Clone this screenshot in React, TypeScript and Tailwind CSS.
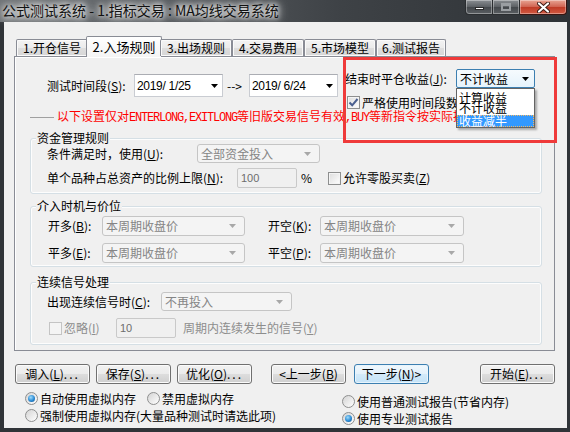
import React from "react";

const tabs = [
  { label: "1.开仓信号", active: false },
  { label: "2.入场规则", active: true },
  { label: "3.出场规则", active: false },
  { label: "4.交易费用", active: false },
  { label: "5.市场模型", active: false },
  { label: "6.测试报告", active: false },
];

function Acc({ k }: { k: string }) {
  return (
    <>
      (<span className="underline underline-offset-[1px]">{k}</span>)
    </>
  );
}

function Arrow({ color }: { color: string }) {
  return (
    <svg width="7" height="4" viewBox="0 0 7 4">
      <path d="M0 0h7L3.5 4z" fill={color} />
    </svg>
  );
}

function DisabledSelect({ text, className }: { text: string; className: string }) {
  return (
    <div
      className={
        "flex items-center justify-between rounded-[3px] border border-[#c5c5c5] bg-[#f4f4f4] pl-[3px] pr-[8px] text-[#858585] " +
        className
      }
    >
      <span>{text}</span>
      <Arrow color="#a8a8a8" />
    </div>
  );
}

function DisabledInput({ value }: { value: string }) {
  return (
    <div className="flex h-[20px] w-[60px] items-start rounded-[2px] border border-[#c9c9c9] bg-[#f0f0f0] pl-[3px] pt-[1px] font-['Liberation_Sans',sans-serif] text-[11px] text-[#6d6d6d]">
      {value}
    </div>
  );
}

function Check({ checked, disabled }: { checked?: boolean; disabled?: boolean }) {
  return (
    <div
      className={
        "flex h-[13px] w-[13px] shrink-0 items-center justify-center border " +
        (disabled
          ? "border-[#c4c4c4] bg-[#f4f4f4]"
          : "border-[#8e8f8f] bg-[linear-gradient(135deg,#dcdcdc,#ffffff)] shadow-[inset_0_0_0_1px_#f4f4f4]")
      }
    >
      {checked && (
        <svg width="11" height="11" viewBox="0 0 11 11">
          <path d="M1.5 5.5L4.2 8.3L9.5 2" fill="none" stroke="#4a5f8f" strokeWidth="2" />
        </svg>
      )}
    </div>
  );
}

function Radio({ checked }: { checked?: boolean }) {
  return (
    <div className="flex h-[13px] w-[13px] shrink-0 items-center justify-center rounded-full border border-[#8e8f8f] bg-[linear-gradient(135deg,#d4d4d4,#ffffff)]">
      {checked && (
        <div className="h-[7px] w-[7px] rounded-full bg-[radial-gradient(circle_at_40%_35%,#9fdcfb,#2a8ad4_55%,#0f4d86)]" />
      )}
    </div>
  );
}

function Btn({ children, className, focus }: { children: React.ReactNode; className: string; focus?: boolean }) {
  return (
    <div
      className={
        "flex h-[20px] w-[75px] items-center justify-center rounded-[3px] border leading-none " +
        (focus
          ? "border-[#3c7fb1] bg-[linear-gradient(#f1f8fd,#e3f1fb_50%,#d3eaf9_51%,#c4e3f8)] shadow-[inset_0_0_0_1px_#e8f4fc] "
          : "border-[#707070] bg-[linear-gradient(#f2f2f2,#ebebeb_50%,#dddddd_51%,#cfcfcf)] shadow-[inset_0_0_0_1px_#fbfbfb] ") +
        className
      }
    >
      {children}
    </div>
  );
}

function Dots() {
  return <span className="tracking-[2px]">...</span>;
}

function Group({ title, className, children }: { title: string; className: string; children: React.ReactNode }) {
  return (
    <div
      className={
        "relative ml-[15px] w-[512px] rounded-[3px] border border-[#d5dfe5] shadow-[inset_0_0_0_1px_#fdfdfd] " + className
      }
    >
      <span className="absolute -top-[8px] left-[5px] bg-[#f0f0f0] px-[1px] leading-[14px]">{title}</span>
      {children}
    </div>
  );
}

export default function App() {
  return (
    <div className="relative flex h-[432px] w-[570px] flex-col overflow-hidden bg-[#303438] font-['Noto_Sans_CJK_SC',sans-serif] text-[12px] text-black">
      {/* title bar */}
      <div className="flex h-[22px] shrink-0 items-start justify-between bg-[linear-gradient(90deg,#6f7376_0%,#585c60_30%,#3e4246_60%,#2e3236_100%)]">
        <div className="pl-[2px] pt-[1px] text-[14px] leading-[18px] text-[#111] [text-shadow:0_0_5px_#fff,0_0_9px_#fff,0_0_12px_#fff]">
          公式测试系统 - 1.指标交易 : MA均线交易系统
        </div>
        <div className="mr-[3px] flex">
          <div className="flex h-[15px] w-[28px] items-center justify-center rounded-bl-[4px] border border-t-0 border-[#2a2d30] bg-[linear-gradient(#8a8e92,#5b5f63_50%,#44484c_51%,#5a5e62)] shadow-[inset_0_0_0_1px_rgba(255,255,255,0.35)]">
            <div className="mt-[3px] h-[3px] w-[9px] border border-[#2a2a2a] bg-white" />
          </div>
          <div className="flex h-[15px] w-[27px] items-center justify-center border border-l-0 border-t-0 border-[#2a2d30] bg-[linear-gradient(#8a8e92,#5b5f63_50%,#44484c_51%,#5a5e62)] shadow-[inset_0_0_0_1px_rgba(255,255,255,0.35)]">
            <div className="h-[8px] w-[10px] border-[2px] border-t-[3px] border-[#9a9ea2]" />
          </div>
          <div className="flex h-[15px] w-[47px] items-center justify-center rounded-br-[4px] border border-l-0 border-t-0 border-[#3a1410] bg-[linear-gradient(#e8a493,#d0624f_50%,#bf3a25_51%,#d25a42)] shadow-[inset_0_0_0_1px_rgba(255,255,255,0.35)]">
            <svg width="13" height="11" viewBox="0 0 13 11">
              <path d="M2 1.5L11 9.5M11 1.5L2 9.5" stroke="#3a1a14" strokeWidth="4" strokeLinecap="round" />
              <path d="M2 1.5L11 9.5M11 1.5L2 9.5" stroke="#fff" strokeWidth="2.2" strokeLinecap="round" />
            </svg>
          </div>
        </div>
      </div>

      {/* client */}
      <div className="mb-[4px] ml-[4px] mr-[3px] flex flex-1 flex-col bg-[#f0f0f0]">
        {/* tabs */}
        <div className="relative z-10 -mb-px mt-[14px] flex h-[21px] items-end pl-[12px]">
          {tabs.map((t, i) =>
            t.active ? (
              <div
                key={t.label}
                className="-mx-[2px] flex h-[21px] w-[76px] items-start justify-center rounded-t-[2px] border border-b-0 border-[#898c95] bg-[linear-gradient(#ffffff,#f4f4f4)] pt-[1px] text-[13px] leading-[17px]"
              >
                {t.label}
              </div>
            ) : (
              <div
                key={t.label}
                className={
                  "mb-[1px] flex h-[17px] items-center justify-center rounded-t-[2px] border border-b-0 border-[#898c95] bg-[linear-gradient(#f3f3f3,#ebebeb_50%,#dedede_51%,#d6d6d6)] shadow-[inset_0_0_0_1px_#fafafa] leading-none " +
                  (i === 5 ? "w-[70px]" : "w-[72px]")
                }
              >
                {t.label}
              </div>
            )
          )}
        </div>

        {/* panel */}
        <div className="relative ml-[10px] flex h-[295px] w-[541px] flex-col border border-[#898c95] bg-[#f0f0f0] shadow-[inset_1px_1px_0_#ffffff]">
          <div className="mt-[12px] flex h-[41px]">
            <div className="mt-[5px] flex h-[23px] items-center pl-[32px]">
              <span className="w-[87px]">
                测试时间段<Acc k="S" />:
              </span>
              <div className="flex h-[23px] w-[89px] items-center justify-between border border-[#c9ccd2] border-t-[#abadb3] bg-white pl-[2px] pr-[4px] font-['Liberation_Sans',sans-serif] text-[12px] tracking-[-0.3px]">
                <span>2019/ 1/25</span>
                <Arrow color="#000" />
              </div>
              <span className="ml-[4px] w-[22px]">--&gt;</span>
              <div className="flex h-[23px] w-[89px] items-center justify-between border border-[#c9ccd2] border-t-[#abadb3] bg-white pl-[2px] pr-[4px] font-['Liberation_Sans',sans-serif] text-[12px] tracking-[-0.3px]">
                <span>2019/ 6/24</span>
                <Arrow color="#000" />
              </div>
            </div>
            <div className="ml-[7px] flex flex-col">
              <div className="flex h-[19px] items-center">
                <span className="w-[111px]">
                  结束时平仓收益<Acc k="J" />:
                </span>
                <div className="relative flex h-[19px] w-[79px] items-center justify-between rounded-[2px] border border-[#3c7fb1] bg-[linear-gradient(#f6fbfe,#e6f3fc)] pl-[3px] pr-[5px]">
                  <span>不计收益</span>
                  <Arrow color="#000" />
                  <div className="absolute left-[-1px] top-[18px] z-20 h-[40px] w-[79px] border border-[#646464] bg-white pt-[4px] shadow-[2px_2px_2px_rgba(0,0,0,0.3)]">
                    <div className="h-[10px] pl-[2px] leading-[10px]">计算收益</div>
                    <div className="h-[10px] pl-[2px] leading-[10px]">不计收益</div>
                    <div className="mt-[2px] h-[12px] border border-dotted border-[#f2b866] bg-[#3399ff] pl-[1px] leading-[10px] text-white">
                      收益减半
                    </div>
                  </div>
                </div>
              </div>
              <div className="mt-[8px] flex items-center">
                <div className="ml-[2px]">
                  <Check checked />
                </div>
                <span className="ml-[2px] whitespace-nowrap leading-[13px]">严格使用时间段数据</span>
              </div>
            </div>
          </div>

          <div className="flex h-[14px] items-center">
            <div className="ml-[15px] h-px w-[24px] bg-[#a0a0a0]" />
            <span className="ml-[3px] whitespace-nowrap text-[#ff0000]">
              以下设置仅对
              <span className="font-['Liberation_Mono',monospace] tracking-[-1.2px]">ENTERLONG,EXITLONG</span>
              等旧版交易信号有效
              <span className="font-['Liberation_Mono',monospace] tracking-[-1.2px]">,BUY</span>
              等新指令按实际持仓
            </span>
          </div>

          <Group title="资金管理规则" className="mt-[14px] h-[56px] pl-[16px] pt-[5px]">
            <div className="flex h-[19px] items-center">
              <span className="w-[150px]">
                条件满足时，使用<Acc k="U" />:
              </span>
              <DisabledSelect text="全部资金投入" className="h-[19px] w-[123px]" />
            </div>
            <div className="mt-[5px] flex h-[20px] items-center">
              <span className="w-[190px]">
                单个品种占总资产的比例上限<Acc k="N" />:
              </span>
              <DisabledInput value="100" />
              <span className="w-[31px] pl-[4px]">%</span>
              <Check />
              <span className="ml-[2px]">
                允许零股买卖<Acc k="Z" />
              </span>
            </div>
          </Group>

          <Group title="介入时机与价位" className="mt-[12px] h-[61px] pl-[17px] pt-[9px]">
            <div className="flex h-[20px] items-center">
              <span className="w-[54px]">
                开多<Acc k="B" />:
              </span>
              <DisabledSelect text="本周期收盘价" className="h-[20px] w-[143px]" />
              <span className="ml-[23px] w-[52px]">
                开空<Acc k="K" />:
              </span>
              <DisabledSelect text="本周期收盘价" className="h-[20px] w-[144px]" />
            </div>
            <div className="mt-[7px] flex h-[20px] items-center">
              <span className="w-[54px]">
                平多<Acc k="E" />:
              </span>
              <DisabledSelect text="本周期收盘价" className="h-[20px] w-[143px]" />
              <span className="ml-[23px] w-[52px]">
                平空<Acc k="P" />:
              </span>
              <DisabledSelect text="本周期收盘价" className="h-[20px] w-[144px]" />
            </div>
          </Group>

          <Group title="连续信号处理" className="mt-[15px] h-[63px] pl-[16px] pt-[9px]">
            <div className="flex h-[19px] items-center">
              <span className="w-[114px]">
                出现连续信号时<Acc k="C" />:
              </span>
              <DisabledSelect text="不再投入" className="h-[19px] w-[131px]" />
            </div>
            <div className="mt-[7px] flex h-[20px] items-center text-[#8d8d8d]">
              <div className="ml-[2px]">
                <Check disabled />
              </div>
              <span className="ml-[2px] w-[52px]">
                忽略<Acc k="I" />
              </span>
              <DisabledInput value="10" />
              <span className="ml-[7px]">
                周期内连续发生的信号<Acc k="Y" />
              </span>
            </div>
          </Group>
        </div>

        {/* buttons */}
        <div className="mt-[13px] flex pl-[11px]">
          <Btn className="">
            调入<Acc k="L" />
            <Dots />
          </Btn>
          <Btn className="ml-[6px]">
            保存<Acc k="S" />
            <Dots />
          </Btn>
          <Btn className="ml-[6px]">
            优化<Acc k="O" />
            <Dots />
          </Btn>
          <Btn className="ml-[19px]">
            &lt;上一步<Acc k="B" />
          </Btn>
          <Btn className="ml-[8px]" focus>
            下一步<Acc k="N" />&gt;
          </Btn>
          <Btn className="ml-[51px]">
            开始<Acc k="E" />
            <Dots />
          </Btn>
        </div>

        {/* radios */}
        <div className="mt-[6px] flex pl-[21px]">
          <div className="flex w-[317px] flex-col">
            <div className="flex h-[17px] items-center">
              <Radio checked />
              <span className="ml-[2px] w-[96px]">自动使用虚拟内存</span>
              <div className="ml-[11px]">
                <Radio />
              </div>
              <span className="ml-[2px]">禁用虚拟内存</span>
            </div>
            <div className="flex h-[17px] items-center">
              <Radio />
              <span className="ml-[2px]">强制使用虚拟内存(大量品种测试时请选此项)</span>
            </div>
          </div>
          <div className="flex flex-col pt-[3px]">
            <div className="flex h-[17px] items-center">
              <Radio />
              <span className="ml-[2px]">使用普通测试报告(节省内存)</span>
            </div>
            <div className="flex h-[17px] items-center">
              <Radio checked />
              <span className="ml-[2px]">使用专业测试报告</span>
            </div>
          </div>
        </div>
      </div>

      {/* red annotation box */}
      <div className="pointer-events-none absolute left-[343px] top-[57px] z-30 h-[86px] w-[214px] border-[3px] border-[#ef3a3a]" />
    </div>
  );
}
